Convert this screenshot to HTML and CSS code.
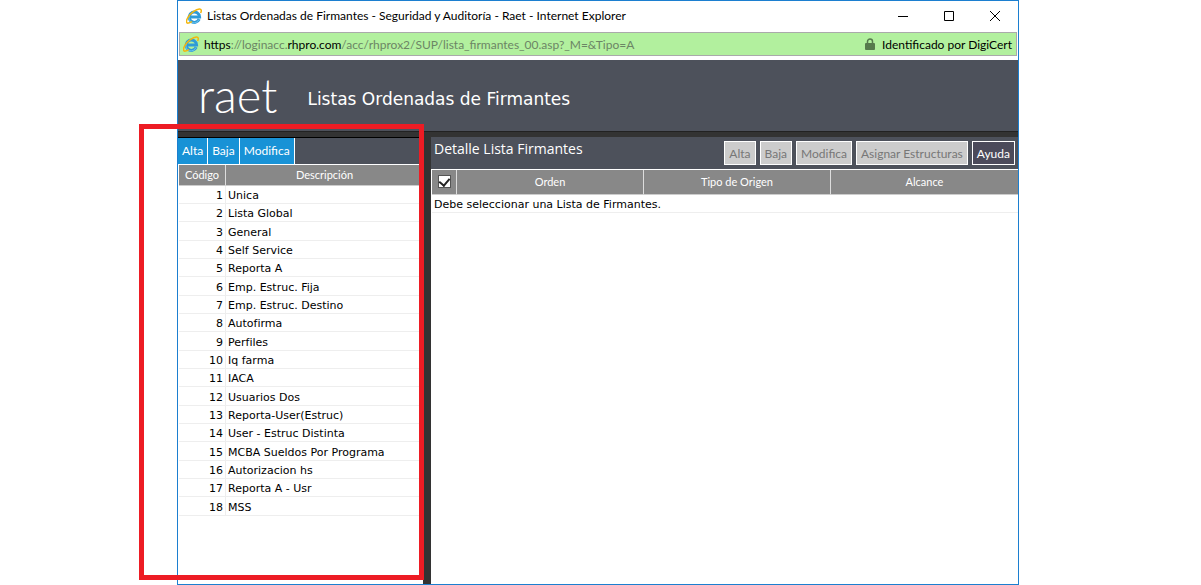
FILE: index.html
```html
<!DOCTYPE html>
<html lang="es">
<head>
    <meta charset="UTF-8">
    <meta name="viewport" content="width=device-width, initial-scale=1.0">
    <title>Listas Ordenadas de Firmantes - Seguridad y Auditoría - Raet</title>
    <link rel="stylesheet" href="styles.css">
</head>
<body>
    <svg class="defs" width="0" height="0" aria-hidden="true">
        <symbol id="ie" viewBox="0 0 16 16">
            <path d="M13.2 11.2A5.2 5.2 0 1 1 13.6 9H4.5" fill="none" stroke="#2f9bd8" stroke-width="3"/>
            <path d="M12.8 11.6A5 5 0 0 1 3.2 8" fill="none" stroke="#6cc5ee" stroke-width="1"/>
            <path d="M14.6 5C15.8 2.6 15.3.8 13.4.9 10.2 1 4.4 5.2 1.700 9.800-.2 13.2.2 15.400 2.300 15.1 3.5 15 4.800 14.400 6 13.5" fill="none" stroke="#f3b60e" stroke-width="1.5"/>
        </symbol>
    </svg>

    <div class="window">
        <div class="titlebar">
            <svg class="ie"><use href="#ie"/></svg>
            <span class="caption">Listas Ordenadas de Firmantes - Seguridad y Auditoría - Raet - Internet Explorer</span>
            <div class="window-buttons">
                <button aria-label="Minimizar"><svg viewBox="0 0 12 12"><path d="M1 6.5h10"/></svg></button>
                <button aria-label="Maximizar"><svg viewBox="0 0 12 12"><path d="M1.5 1.5h9v9h-9z"/></svg></button>
                <button aria-label="Cerrar"><svg viewBox="0 0 12 12"><path d="M1 1l10 10M11 1L1 11"/></svg></button>
            </div>
        </div>

        <div class="address">
            <svg class="ie"><use href="#ie"/></svg>
            <span class="url"><b>https</b>://loginacc.<b>rhpro.com</b>/acc/rhprox2/SUP/lista_firmantes_00.asp?_M=&amp;Tipo=A</span>
            <svg class="lock" viewBox="0 0 10 12"><path d="M2.5 6V3.5a2.5 2.5 0 0 1 5 0V6" fill="none" stroke="#567a4c" stroke-width="1.5"/><rect y="5" width="10" height="7" rx="1" fill="#567a4c"/></svg>
            <span>Identificado por DigiCert</span>
        </div>

        <header class="banner">
            <span class="logo">raet</span>
            <h1>Listas Ordenadas de Firmantes</h1>
        </header>

        <main class="frames">
            <section class="list">
                <div class="toolbar">
                    <button>Alta</button>
                    <button>Baja</button>
                    <button>Modifica</button>
                </div>
                <table>
                    <thead>
                        <tr><th class="code">Código</th><th>Descripción</th></tr>
                    </thead>
                    <tbody>
                        <tr><td>1</td><td>Unica</td></tr>
                        <tr><td>2</td><td>Lista Global</td></tr>
                        <tr><td>3</td><td>General</td></tr>
                        <tr><td>4</td><td>Self Service</td></tr>
                        <tr><td>5</td><td>Reporta A</td></tr>
                        <tr><td>6</td><td>Emp. Estruc. Fija</td></tr>
                        <tr><td>7</td><td>Emp. Estruc. Destino</td></tr>
                        <tr><td>8</td><td>Autofirma</td></tr>
                        <tr><td>9</td><td>Perfiles</td></tr>
                        <tr><td>10</td><td>Iq farma</td></tr>
                        <tr><td>11</td><td>IACA</td></tr>
                        <tr><td>12</td><td>Usuarios Dos</td></tr>
                        <tr><td>13</td><td>Reporta-User(Estruc)</td></tr>
                        <tr><td>14</td><td>User - Estruc Distinta</td></tr>
                        <tr><td>15</td><td>MCBA Sueldos Por Programa</td></tr>
                        <tr><td>16</td><td>Autorizacion hs</td></tr>
                        <tr><td>17</td><td>Reporta A - Usr</td></tr>
                        <tr><td>18</td><td>MSS</td></tr>
                    </tbody>
                </table>
                <div class="highlight"></div>
            </section>

            <section class="detail">
                <div class="detail-head">
                    <h2>Detalle Lista Firmantes</h2>
                    <button disabled>Alta</button>
                    <button disabled>Baja</button>
                    <button disabled>Modifica</button>
                    <button disabled>Asignar Estructuras</button>
                    <button class="help">Ayuda</button>
                </div>
                <table>
                    <thead>
                        <tr>
                            <th class="check"><input type="checkbox" aria-label="Seleccionar todos" checked></th>
                            <th>Orden</th>
                            <th>Tipo de Origen</th>
                            <th>Alcance</th>
                        </tr>
                    </thead>
                    <tbody>
                        <tr><td colspan="4">Debe seleccionar una Lista de Firmantes.</td></tr>
                    </tbody>
                </table>
            </section>
        </main>
    </div>
</body>
</html>
```
FILE: styles.css
```css
* {
    box-sizing: border-box;
}
body {
    margin: 0;
    padding: 0 182px 0 177px;
    background-color: #fff;
    color: #000;
    font-family: Lato, "Open Sans", sans-serif;
    font-size: 12px;
}
button {
    font: inherit;
    cursor: pointer;
}
.defs {
    display: block;
}
.window {
    display: flex;
    flex-direction: column;
    min-height: 100vh;
    border: 1px solid #1c7fd0;
}

/* browser chrome */
.titlebar {
    display: flex;
    align-items: center;
    gap: 5px;
    height: 31px;
    padding: 0 0 2px 8px;
}
.ie {
    flex: none;
    width: 16px;
    height: 16px;
}
.caption {
    flex: 1;
    white-space: nowrap;
}
.window-buttons {
    display: flex;
}
.window-buttons button {
    display: flex;
    align-items: center;
    justify-content: center;
    width: 46px;
    height: 28px;
    padding: 0;
    border: 0;
    background: none;
}
.window-buttons svg {
    width: 12px;
    height: 12px;
    fill: none;
    stroke: #000;
}
.address {
    display: flex;
    align-items: center;
    gap: 5px;
    height: 24px;
    margin: 0 1px 4px;
    padding: 0 4px 0 3px;
    border: 1px solid #aaa;
    background-color: #b2f09e;
    white-space: nowrap;
}
.url {
    flex: 1;
    color: #6c8565;
}
.url b {
    color: #000;
    font-weight: normal;
}
.lock {
    width: 10px;
    height: 12px;
    margin-right: 2px;
}

.banner {
    display: flex;
    align-items: center;
    gap: 30px;
    height: 71px;
    padding: 0 20px;
    background-color: #4d515b;
    color: #fff;
}
.logo {
    padding-bottom: 2px;
    font-size: 47px;
    font-weight: 300;
    line-height: 68px;
}
.banner h1 {
    margin: 7px 0 0;
    font-family: "DejaVu Sans", Verdana, sans-serif;
    font-size: 17px;
    font-weight: normal;
}

/* frames */
.frames {
    flex: 1;
    display: grid;
    grid-template-columns: 245px 1fr;
    gap: 8px;
    padding-top: 5px;
    border-top: 1px solid #222;
    background-color: #333;
}
.list, .detail {
    position: relative;
    background-color: #fff;
}
table {
    width: 100%;
    border-collapse: separate;
    border-spacing: 0;
    table-layout: fixed;
    font-family: "DejaVu Sans", Verdana, sans-serif;
    font-size: 11px;
}
th {
    padding: 0 0 1px;
    border-right: 1px solid #ddd;
    border-bottom: 1px solid #ccc;
    background-color: #888;
    color: #fff;
    font-family: Lato, "Open Sans", sans-serif;
    font-weight: normal;
}
th:last-child {
    border-right: 0;
}
td {
    height: 18px;
    padding: 2px 2px 0;
    border-bottom: 1px solid #eee;
    line-height: 15px;
    white-space: nowrap;
}
.list {
    border-top: 1px solid #000;
}
.toolbar {
    display: flex;
    height: 27px;
    border-bottom: 1px solid #fff;
    background-color: #4d515b;
}
.toolbar button {
    padding: 0 4px 2px;
    border: 0;
    border-right: 1px solid #fff;
    background-color: #1892d6;
    color: #fff;
}
.list table {
    padding-left: 1px;
}
.list th {
    height: 21px;
}
.list .code {
    width: 47px;
}
.list td:first-child {
    border-right: 1px solid #eee;
    text-align: right;
}
.list tr:nth-child(3n) td {
    height: 19px;
}
.highlight {
    position: absolute;
    inset: -14px -1px 4px -39px;
    border: 5px solid #ed1c24;
    pointer-events: none;
}

.detail-head {
    display: flex;
    align-items: center;
    gap: 4px;
    height: 33px;
    padding: 0 3px;
    border-bottom: 1px solid #fff;
    background-color: #4d515b;
    color: #fff;
}
.detail-head h2 {
    flex: 1;
    align-self: flex-start;
    margin: 2px 0 0;
    font-family: "Open Sans", "Noto Sans", sans-serif;
    font-size: 14px;
    font-weight: normal;
}
.detail-head button {
    height: 24px;
    padding: 0 4px;
    border: 1px solid #fff;
    background-color: #ccc;
    color: #777;
}
.detail-head .help {
    background-color: #4b4a5a;
    color: #fff;
}
.detail table {
    padding-left: 1px;
}
.detail th {
    height: 25px;
}
.detail .check {
    width: 25px;
}
.check input {
    appearance: none;
    display: grid;
    place-items: center;
    width: 13px;
    height: 13px;
    margin: 0 auto;
    border: 1px solid #555;
    background-color: #fff;
}
.check input:checked::after {
    content: "";
    width: 5px;
    height: 8px;
    margin-bottom: 2px;
    border: solid #222;
    border-width: 0 2px 2px 0;
    transform: rotate(40deg);
}
```
